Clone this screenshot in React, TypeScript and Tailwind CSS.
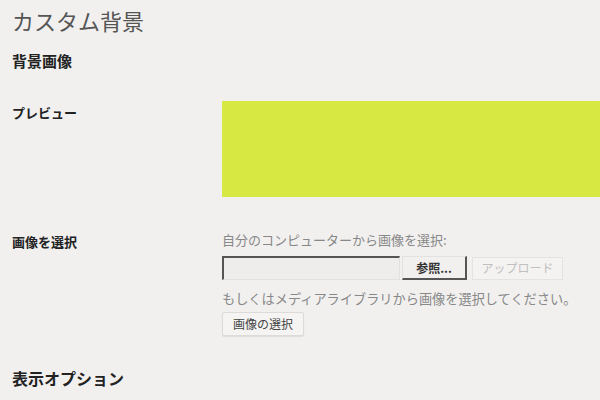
import React from "react";

function Row({ label, children, className }: { label: string; children: React.ReactNode; className?: string }) {
  return (
    <div className={"grid grid-cols-[210px_1fr] " + (className ?? "")}>
      <div className="pt-[2px] text-[13px] font-bold text-[#222]">{label}</div>
      <div>{children}</div>
    </div>
  );
}

export default function App() {
  return (
    <div className="w-[600px] h-[400px] overflow-hidden bg-[#f1f0ef] pl-3 font-['Noto_Sans_CJK_JP',sans-serif]">
      <h1 className="mt-[5px] text-[22px] leading-[30px] text-[#555]">カスタム背景</h1>
      <h2 className="mt-[16px] text-[15px] leading-[20px] font-bold text-[#222]">背景画像</h2>

      <Row label="プレビュー" className="mt-[30px] leading-[20px]">
        <div className="h-[96px] bg-[#d8e843]" />
      </Row>

      <Row label="画像を選択" className="mt-[35px] leading-[16px]">
        <p className="-mt-[2px] text-[13px] leading-[20px] text-[#888]">自分のコンピューターから画像を選択:</p>
        <div className="mt-[6px] flex items-center">
          <div className="h-[24px] w-[178px] border-t-2 border-l-2 border-r border-b border-t-[#555] border-l-[#555] border-r-[#e2e1e0] border-b-[#e2e1e0] bg-[#eeedec]" />
          <button className="ml-[2px] h-[24px] w-[65px] border-t border-l border-r-2 border-b-2 border-t-[#e2e1e0] border-l-[#e2e1e0] border-r-[#555] border-b-[#555] bg-[#f1f0ef] text-[12px] font-bold text-[#333]">
            参照...
          </button>
          <button className="ml-[5px] h-[23px] w-[91px] border border-[#e4e3e2] bg-[#f4f3f2] text-[12px] text-[#c0c0c0]">
            アップロード
          </button>
        </div>
        <p className="mt-[9px] text-[13.2px] leading-[20px] text-[#888]">もしくはメディアライブラリから画像を選択してください。</p>
        <button className="mt-[3px] h-[24px] w-[82px] rounded-[2px] border border-[#dcdbda] bg-[#f5f4f3] text-[12px] text-[#444] shadow-[0_1px_1px_rgba(0,0,0,0.08)]">
          画像の選択
        </button>
      </Row>

      <h2 className="mt-[31px] text-[16px] leading-[22px] font-bold text-[#222]">表示オプション</h2>
    </div>
  );
}
